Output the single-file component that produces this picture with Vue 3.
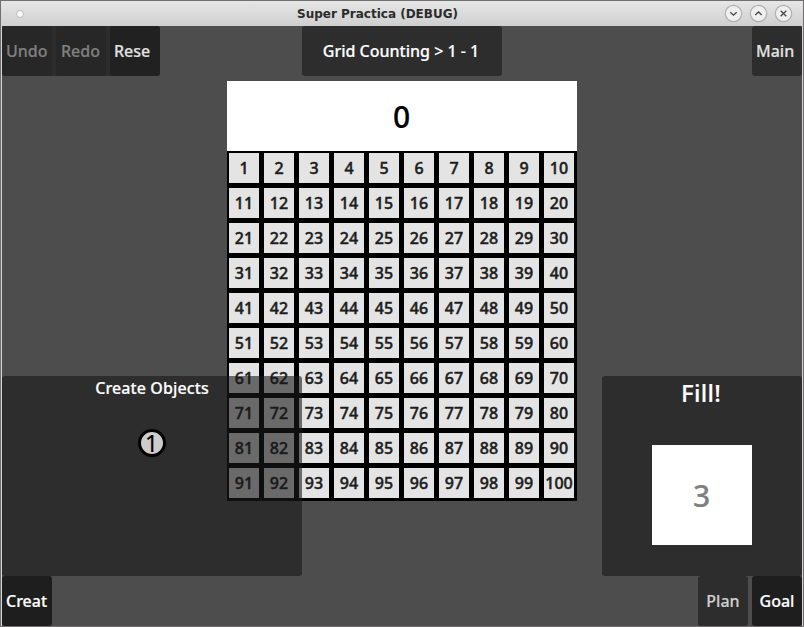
<script setup>
const numbers = Array.from({ length: 100 }, (_, i) => i + 1)
const glyphs = [
  { name: 'Minimize', d: 'M6.3 8.2 9.5 11.2 12.7 8.2' },
  { name: 'Maximize', d: 'M6.3 11 9.5 8 12.7 11' },
  { name: 'Close', d: 'M6.7 6.7 12.3 12.3M12.3 6.7 6.7 12.3' },
]
</script>

<template>
  <div class="window">
    <header class="titlebar">
      <span class="dot"></span>
      <span class="title">Super Practica (DEBUG)</span>
      <div class="controls">
        <svg v-for="g in glyphs" :key="g.name" width="19" height="19" viewBox="0 0 19 19">
          <circle cx="9.5" cy="9.5" r="8.2" fill="#efefef" stroke="#b0b0b0" stroke-width="1.2" />
          <path :d="g.d" fill="none" stroke="#484848" stroke-width="1.3" />
        </svg>
      </div>
    </header>

    <main class="stage">
      <div class="top">
        <div class="tools">
          <button class="btn disabled">Undo</button>
          <button class="btn disabled redo">Redo</button>
          <button class="btn reset">Rese</button>
        </div>
        <div class="level">Grid Counting &gt; 1 - 1</div>
        <button class="btn main">Main</button>
      </div>

      <section class="board">
        <div class="total">0</div>
        <div class="grid">
          <div v-for="n in numbers" :key="n" class="cell">{{ n }}</div>
        </div>
      </section>

      <div class="bottom">
        <div class="panels">
          <section class="panel create">
            <div class="heading">Create Objects</div>
            <div class="coin"><span>1</span></div>
          </section>
          <section class="panel goal">
            <div class="fill">Fill!</div>
            <div class="target">3</div>
          </section>
        </div>
        <div class="tabs">
          <button class="btn active">Creat</button>
          <div class="right">
            <button class="btn plan">Plan</button>
            <button class="btn active centered">Goal</button>
          </div>
        </div>
      </div>
    </main>
  </div>
</template>

<style>
body {
  margin: 0;
  overflow: hidden;
}
</style>

<style scoped>
.window {
  box-sizing: border-box;
  width: 804px;
  height: 627px;
  border: 1px solid #706e6e;
  background: #d4d4d4;
  font-family: "Noto Sans", "Open Sans", sans-serif;
  font-weight: 500;
  font-size: 16px;
  color: #fff;
}
.titlebar {
  display: flex;
  align-items: center;
  position: relative;
  height: 25px;
  background: linear-gradient(#e6e6e6, #cfcfcf);
}
.dot {
  box-sizing: border-box;
  width: 8px;
  height: 8px;
  margin-left: 15px;
  border: 1px solid #bcbcbc;
  border-radius: 50%;
  background: #fafafa;
}
.title {
  margin-left: 273px;
  font: bold 12px/24px "DejaVu Sans", sans-serif;
  color: #2b2b2b;
  white-space: nowrap;
}
.controls {
  display: flex;
  gap: 6px;
  margin-left: auto;
  margin-right: 10px;
}
.controls svg {
  display: block;
}
.stage {
  position: relative;
  width: 800px;
  height: 600px;
  margin-left: 1px;
  background: #4d4d4d;
  -webkit-text-stroke: 0.2px currentColor;
}
.top {
  display: grid;
  grid-template-columns: 300px 200px 300px;
  height: 50px;
}
.tools {
  display: flex;
  gap: 4px;
  width: 158px;
  border-radius: 3px;
  background: #2d2d2d;
}
.btn {
  box-sizing: border-box;
  width: 50px;
  height: 50px;
  padding: 0 0 0 4px;
  border: 0;
  border-radius: 3px;
  font: inherit;
  line-height: 50px;
  text-align: left;
  white-space: nowrap;
  background: #2d2d2d;
  color: #e0e0e0;
}
.btn.disabled {
  background: #272727;
  color: #808080;
}
.btn.redo {
  padding-left: 5px;
}
.btn.reset {
  background: #212121;
}
.btn.main {
  justify-self: end;
}
.btn.active {
  background: #1e1e1e;
  color: #fff;
}
.btn.plan {
  padding: 0;
  text-align: center;
  color: #cfcfcf;
}
.btn.centered {
  padding: 0;
  text-align: center;
}
.level {
  border-radius: 3px;
  background: #2d2d2d;
  line-height: 50px;
  text-align: center;
  padding-right: 2px;
}
.board {
  width: 350px;
  margin: 5px 0 0 225px;
}
.total {
  height: 70px;
  padding-right: 1px;
  background: #fff;
  color: #000;
  font-size: 30px;
  line-height: 72px;
  text-align: center;
}
.grid {
  display: grid;
  grid-template-columns: repeat(10, 35px);
  grid-auto-rows: 35px;
}
.cell {
  box-sizing: border-box;
  border: solid #000;
  border-width: 2px 3px 3px 2px;
  background: #e4e4e4;
  color: #1c1c1c;
  display: flex;
  align-items: center;
  justify-content: center;
  line-height: 30px;
  -webkit-text-stroke: 0.45px currentColor;
}
/* The drawers float over the lower part of the board. */
.bottom {
  position: absolute;
  left: 0;
  right: 0;
  bottom: 0;
}
.panels,
.tabs {
  display: flex;
  justify-content: space-between;
}
.panel {
  display: flex;
  flex-direction: column;
  align-items: center;
  height: 200px;
  border-radius: 3px;
  background: rgba(25, 25, 25, 0.6);
}
.create {
  width: 300px;
}
.heading {
  line-height: 24px;
  letter-spacing: 0.1px;
}
.coin {
  box-sizing: border-box;
  display: flex;
  align-items: center;
  justify-content: center;
  width: 28px;
  height: 28px;
  margin-top: 29px;
  padding-right: 1px;
  border: 3px solid #000;
  border-radius: 50%;
  background: #ccc;
  color: #000;
  font-size: 23px;
  font-weight: 400;
  line-height: 22px;
}
.goal {
  width: 200px;
}
.fill {
  font-size: 24px;
  line-height: 34px;
  letter-spacing: 0.3px;
  padding-right: 2px;
}
.target {
  box-sizing: border-box;
  width: 100px;
  height: 100px;
  margin-top: 35px;
  padding-right: 1px;
  background: #fff;
  color: #808080;
  font-size: 30px;
  line-height: 102px;
  text-align: center;
}
.total {
  box-sizing: border-box;
}
.right {
  display: flex;
  gap: 4px;
}
</style>
